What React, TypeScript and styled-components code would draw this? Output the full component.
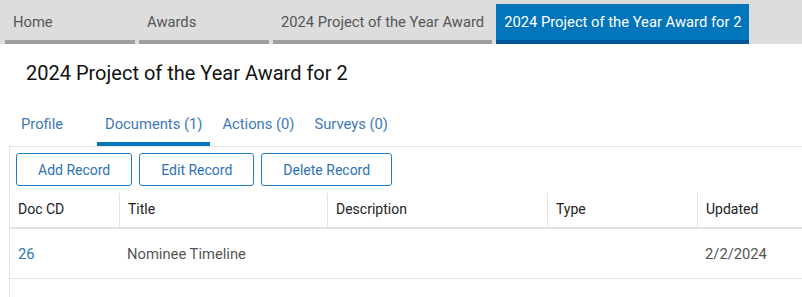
import React from "react";
import styled, { createGlobalStyle } from "styled-components";

const Global = createGlobalStyle`
  html, body { margin: 0; padding: 0; overflow: hidden; background: #fff; }
  body { font-family: Roboto, "Liberation Sans", Arial, sans-serif; font-size: 14px; }
  * { box-sizing: border-box; }
`;

const Page = styled.div`
  width: 802px;
  height: 297px;
  overflow: hidden;
`;

const TabBar = styled.div`
  display: flex;
  gap: 4px;
  padding: 4px 5px 0;
  height: 44px;
  background: #dddddd;
`;

const Tab = styled.div<{ $active?: boolean }>`
  min-width: 130px;
  height: 40px;
  padding: 0 8px;
  line-height: 36px;
  white-space: nowrap;
  font-size: 14.75px;
  color: ${(p) => (p.$active ? "#ffffff" : "#555555")};
  background: ${(p) => (p.$active ? "#0275bb" : "transparent")};
  border-bottom: 4px solid ${(p) => (p.$active ? "#01589b" : "#9e9e9e")};
`;

const Title = styled.h1`
  margin: 17px 0 0 26px;
  font-size: 20px;
  font-weight: 400;
  line-height: 24px;
  color: #111;
`;

const SubTabs = styled.div`
  display: flex;
  gap: 4px;
  margin: 21px 0 0 13px;
`;

const SubTab = styled.div<{ $active?: boolean }>`
  min-width: 80px;
  padding: 8px 8px 8px;
  line-height: 20px;
  font-size: 14.75px;
  color: #3d79b4;
  border-bottom: 4px solid ${(p) => (p.$active ? "#0275bb" : "transparent")};
  white-space: nowrap;
`;

const Panel = styled.div`
  margin-left: 9px;
  border-top: 1px solid #e3e3e3;
  border-left: 1px solid #e3e3e3;
  height: 200px;
`;

const Toolbar = styled.div`
  display: flex;
  gap: 7px;
  padding: 6px 6px 7px;
`;

const Button = styled.button`
  height: 33px;
  padding: 0 21px;
  padding-top: 1px;
  border: 1px solid #1c80c2;
  border-radius: 3px;
  background: #fff;
  color: #2f72b3;
  font-family: Roboto, "Liberation Sans", Arial, sans-serif;
  font-size: 14px;
`;

const Grid = styled.div`
  display: grid;
  grid-template-columns: 109px 208px 220px 150px 130px;
  width: 817px;
`;

const HeadCell = styled.div<{ $first?: boolean }>`
  height: 36px;
  padding: 0 8px 2px;
  display: flex;
  align-items: center;
  color: #222;
  font-size: 14px;
  border-bottom: 2px solid #e3e3e3;
  border-left: ${(p) => (p.$first ? "none" : "1px solid #e3e3e3")};
`;

const Cell = styled.div<{ $link?: boolean }>`
  height: 50px;
  padding: 0 8px;
  display: flex;
  align-items: center;
  font-size: 14.75px;
  color: ${(p) => (p.$link ? "#2a78bd" : "#555")};
  border-bottom: 1px solid #e3e3e3;
`;

const headers = ["Doc CD", "Title", "Description", "Type", "Updated"];
const row = ["26", "Nominee Timeline", "", "", "2/2/2024"];

export default function App() {
  return (
    <Page>
      <Global />
      <TabBar>
        <Tab>Home</Tab>
        <Tab>Awards</Tab>
        <Tab>2024 Project of the Year Award</Tab>
        <Tab $active>2024 Project of the Year Award for 2</Tab>
      </TabBar>
      <Title>2024 Project of the Year Award for 2</Title>
      <SubTabs>
        <SubTab>Profile</SubTab>
        <SubTab $active>Documents (1)</SubTab>
        <SubTab>Actions (0)</SubTab>
        <SubTab>Surveys (0)</SubTab>
      </SubTabs>
      <Panel>
        <Toolbar>
          <Button>Add Record</Button>
          <Button>Edit Record</Button>
          <Button>Delete Record</Button>
        </Toolbar>
        <Grid>
          {headers.map((h, i) => (
            <HeadCell key={h} $first={i === 0}>
              {h}
            </HeadCell>
          ))}
          {row.map((c, i) => (
            <Cell key={i} $link={i === 0}>
              {c}
            </Cell>
          ))}
        </Grid>
      </Panel>
    </Page>
  );
}
